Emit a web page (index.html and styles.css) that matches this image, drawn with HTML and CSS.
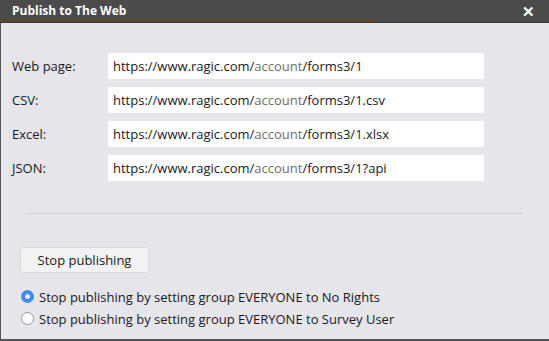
FILE: index.html
```html
<!DOCTYPE html>
<html lang="en">
<head>
  <meta charset="UTF-8">
  <title>Publish to The Web</title>
  <link rel="stylesheet" href="styles.css">
</head>
<body>
  <div class="dialog">
    <header class="titlebar">
      <h1>Publish to The Web</h1>
      <button class="close">&#x2715;</button>
      <div class="progress"></div>
    </header>
    <main class="content">
      <div class="links">
        <div class="row">
          <label>Web page:</label>
          <div class="url">https://www.ragic.com/<span class="acct">account</span>/forms3/1</div>
        </div>
        <div class="row">
          <label>CSV:</label>
          <div class="url">https://www.ragic.com/<span class="acct">account</span>/forms3/1.csv</div>
        </div>
        <div class="row">
          <label>Excel:</label>
          <div class="url">https://www.ragic.com/<span class="acct">account</span>/forms3/1.xlsx</div>
        </div>
        <div class="row">
          <label>JSON:</label>
          <div class="url">https://www.ragic.com/<span class="acct">account</span>/forms3/1?api</div>
        </div>
      </div>
      <hr class="divider">
      <button class="stop">Stop publishing</button>
      <div class="options">
        <label class="option"><span class="radio checked"></span>Stop publishing by setting group EVERYONE to No Rights</label>
        <label class="option"><span class="radio"></span>Stop publishing by setting group EVERYONE to Survey User</label>
      </div>
    </main>
  </div>
</body>
</html>
```
FILE: styles.css
```css
:root {
  --bar-color: #4b4b4b;
  --panel-color: #e6e5ea;
  --text-color: #1a1a1a;
  --muted-color: #6e6e6e;
  --accent-color: #3d8ef0;
}

body {
  margin: 0;
  font-family: 'Open Sans', 'Noto Sans', sans-serif;
  font-size: 13px;
  color: var(--text-color);
  background: var(--panel-color);
}

.dialog {
  width: 549px;
  height: 341px;
  display: flex;
  flex-direction: column;
  box-sizing: border-box;
  border-bottom: 2px solid #555;
}

.titlebar {
  position: relative;
  height: 22px;
  background: var(--bar-color);
  border-bottom: 1px solid #3a3a3a;
  display: flex;
  align-items: center;
  justify-content: space-between;
  padding: 0 12px;
}

.titlebar h1 {
  margin: 0 0 2px;
  font-size: 12px;
  font-weight: bold;
  color: #fff;
}

.close {
  background: none;
  border: none;
  color: #fff;
  font-size: 15px;
  font-weight: bold;
  line-height: 1;
  padding: 0;
  margin: 0 2px 0 0;
  cursor: pointer;
}

/* loading strip under the title */
.progress {
  position: absolute;
  left: 0;
  bottom: 1px;
  width: 373px;
  height: 2px;
  background: #5a4a23;
}

.content {
  flex: 1;
  border-left: 1px solid #555;
  padding: 30px 0 0 11px;
}

.links {
  display: flex;
  flex-direction: column;
  gap: 8px;
}

.row {
  display: flex;
  align-items: center;
}

.row label {
  width: 96px;
}

.url {
  width: 371px;
  height: 26px;
  line-height: 26px;
  padding-left: 5px;
  background: #fff;
}

.acct {
  color: var(--muted-color);
}

.divider {
  margin: 32px 0 0 15px;
  width: 496px;
  border: none;
  border-top: 1px solid #cfcfd3;
}

.stop {
  margin: 33px 0 0 8px;
  width: 129px;
  height: 26px;
  font-family: inherit;
  font-size: 13px;
  color: var(--text-color);
  background: #f2f2f4;
  border: 1px solid #dcdce0;
  border-radius: 3px;
}

.options {
  margin: 14px 0 0 9px;
  display: flex;
  flex-direction: column;
  gap: 3px;
}

.option {
  display: flex;
  align-items: center;
  gap: 5px;
  height: 19px;
  font-size: 13px;
}

.radio {
  width: 11px;
  height: 11px;
  border-radius: 50%;
  border: 1px solid #9a9a9a;
  background: #fff;
  box-sizing: content-box;
}

.radio.checked {
  width: 13px;
  height: 13px;
  border: none;
  background: radial-gradient(circle, #fff 0 2px, var(--accent-color) 2.5px);
}
```
